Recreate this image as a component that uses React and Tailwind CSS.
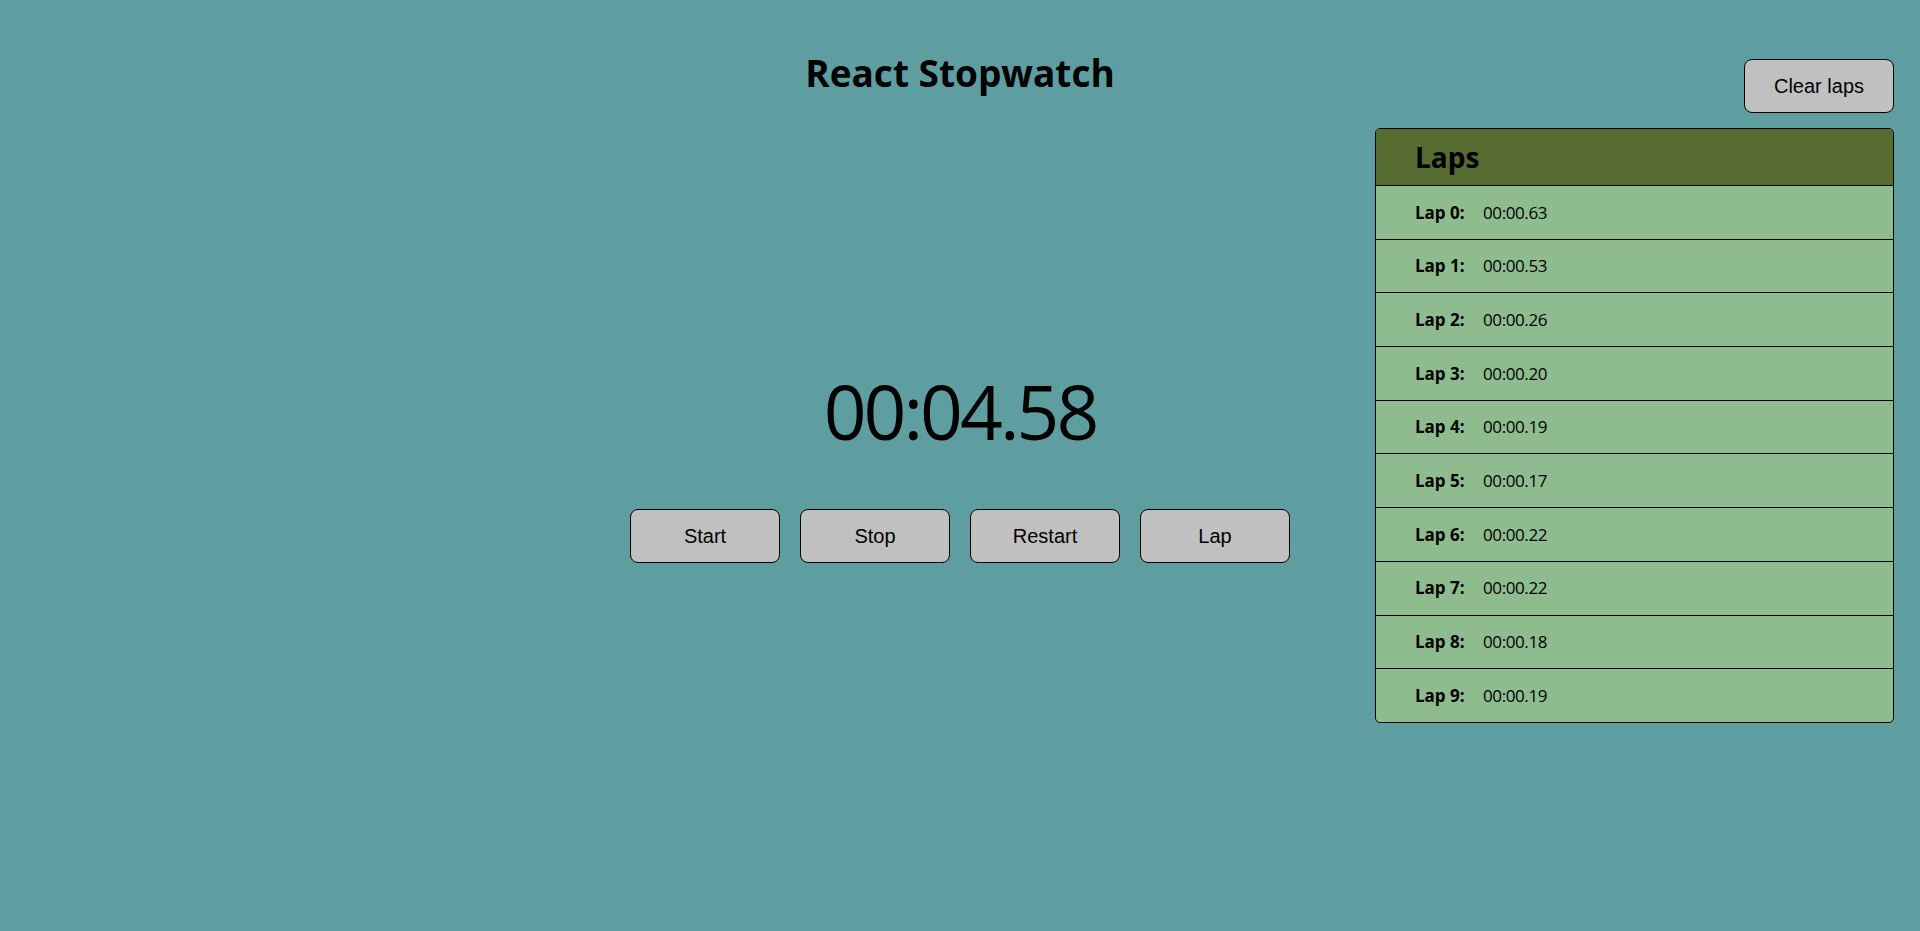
import React from "react";

const laps = [
  "00:00.63",
  "00:00.53",
  "00:00.26",
  "00:00.20",
  "00:00.19",
  "00:00.17",
  "00:00.22",
  "00:00.22",
  "00:00.18",
  "00:00.19",
];

function Btn({ children }) {
  return (
    <button className="w-[150px] h-[54px] rounded-lg border border-black bg-[#c0c0c0] text-[20px] text-black font-['Liberation_Sans',Arial,sans-serif]">
      {children}
    </button>
  );
}

export default function App() {
  return (
    <div className="min-h-[931px] w-full bg-[#5f9ea0] text-black font-['Open_Sans','Noto_Sans',sans-serif] grid grid-cols-[1fr_auto_1fr]">
      <div />
      <div className="flex flex-col items-center">
        <h1 className="mt-[54px] text-[37px] leading-none font-bold">React Stopwatch</h1>
        <div className="mt-[283px] text-[75px] leading-none tracking-[-3px]">00:04.58</div>
        <div className="mt-[60px] flex gap-[20px]">
          <Btn>Start</Btn>
          <Btn>Stop</Btn>
          <Btn>Restart</Btn>
          <Btn>Lap</Btn>
        </div>
      </div>
      <div className="flex flex-col items-end pt-[59px] pr-[26px]">
        <button className="w-[150px] h-[54px] rounded-lg border border-black bg-[#c0c0c0] text-[20px] text-black font-['Liberation_Sans',Arial,sans-serif]">
          Clear laps
        </button>
        <div className="mt-[15px] w-[519px] border border-black rounded-[5px] overflow-hidden bg-[#8fbc8f]">
          <div className="h-[56px] bg-[#556b2f] flex items-center pl-[39px]">
            <h2 className="text-[28px] font-bold leading-none">Laps</h2>
          </div>
          {laps.map((t, i) => (
            <div key={i} className="h-[53.7px] border-t border-black flex items-center pl-[39px] text-[17px]">
              <span className="w-[68px] font-bold">Lap {i}:</span>
              <span className="tracking-[-0.4px]">{t}</span>
            </div>
          ))}
        </div>
      </div>
    </div>
  );
}
